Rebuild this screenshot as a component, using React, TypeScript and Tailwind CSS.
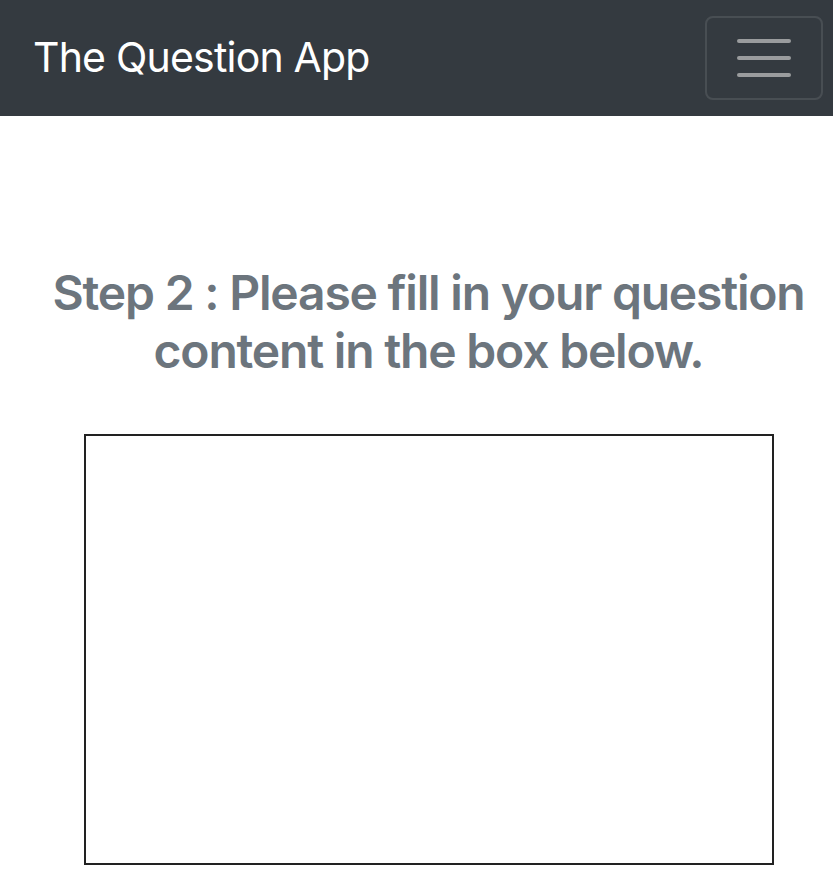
export default function App() {
    return (
        <div className="min-h-screen bg-white font-['Inter','Liberation_Sans',sans-serif]">
            <nav className="flex h-[116px] items-center justify-between bg-[#343a40] pl-[33px] pr-[10px]">
                <span className="text-[41px] tracking-[-0.8px] text-white">The Question App</span>
                <button
                    type="button"
                    className="flex h-[84px] w-[118px] flex-col items-center justify-center gap-[13px] rounded-[8px] border-2 border-white/10"
                >
                    <span className="block h-[4px] w-[54px] rounded-full bg-[#9a9c9e]" />
                    <span className="block h-[4px] w-[54px] rounded-full bg-[#9a9c9e]" />
                    <span className="block h-[4px] w-[54px] rounded-full bg-[#9a9c9e]" />
                </button>
            </nav>

            <main className="flex flex-col items-center pl-[24px] pt-[148px]">
                <h2 className="text-center text-[48px] font-semibold leading-[58px] tracking-[-1.2px] text-[#6c757d]">
                    Step 2 : Please fill in your question
                    <br />
                    content in the box below.
                </h2>
                <textarea className="mt-[54px] h-[431px] w-[690px] resize-none border-2 border-[#222] bg-white outline-none" />
            </main>
        </div>
    );
}
